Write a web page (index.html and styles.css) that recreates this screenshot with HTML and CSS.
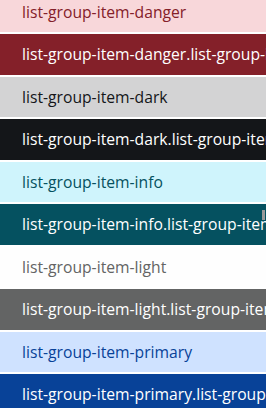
FILE: index.html
```html
<!DOCTYPE html>
<html>
  <head>
    <title>List group items</title>
    <link rel="stylesheet" href="styles.css">
  </head>
  <body>
    <ul class="list-group">
      <li class="item danger">list-group-item-danger</li>
      <li class="item danger active">list-group-item-danger.list-group-item-active</li>
      <li class="item dark">list-group-item-dark</li>
      <li class="item dark active">list-group-item-dark.list-group-item-active</li>
      <li class="item info">list-group-item-info</li>
      <li class="item info active">list-group-item-info.list-group-item-active</li>
      <li class="item light">list-group-item-light</li>
      <li class="item light active">list-group-item-light.list-group-item-active</li>
      <li class="item primary">list-group-item-primary</li>
      <li class="item primary active">list-group-item-primary.list-group-item-active</li>
    </ul>
    <div class="scroll-thumb"></div>
  </body>
</html>
```
FILE: styles.css
```css
body {
  margin: 0;
  background-color: #fff;
  font-family: 'Open Sans', sans-serif;
  font-size: 15.7px;
  overflow: hidden;
}
.list-group {
  list-style: none;
  margin: -8.5px 0 0 0;
  padding: 0;
  display: flex;
  flex-direction: column;
  gap: 2px;
}
.item {
  height: 40.5px;
  padding: 0 0 0 22px;
  display: flex;
  align-items: center;
  white-space: nowrap;
  overflow: hidden;
}
.danger {
  background-color: #f8d7da;
  color: #842029;
}
.danger.active {
  background-color: #842029;
}
.dark {
  background-color: #d3d3d4;
  color: #141619;
}
.dark.active {
  background-color: #141619;
}
.info {
  background-color: #cff4fc;
  color: #055160;
}
.info.active {
  background-color: #055160;
}
.light {
  background-color: #fefefe;
  color: #636464;
}
.light.active {
  background-color: #636464;
}
.primary {
  background-color: #cfe2ff;
  color: #084298;
}
.primary.active {
  background-color: #084298;
}
.item.active {
  color: #fff;
}
.scroll-thumb {
  position: absolute;
  left: 262px;
  top: 210px;
  width: 3px;
  height: 10px;
  background-color: #9a9a9a;
}
```
